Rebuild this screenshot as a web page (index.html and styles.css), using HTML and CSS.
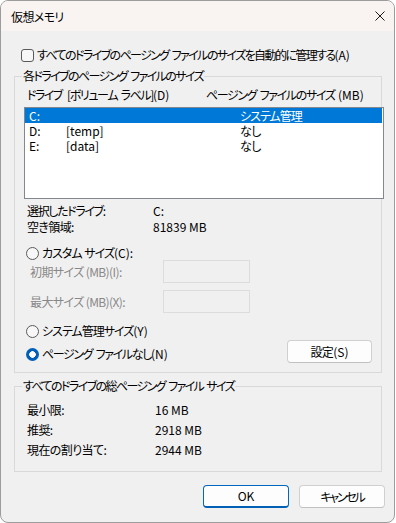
FILE: index.html
```html
<!DOCTYPE html>
<html lang="ja">
<head>
<meta charset="utf-8">
<title>仮想メモリ</title>
<link rel="stylesheet" href="styles.css">
</head>
<body>
<div class="window">
  <div class="titlebar">
    <span class="title">仮想メモリ</span>
    <svg class="close" width="10" height="10" viewBox="0 0 10 10"><path d="M0.5 0.5 L9.5 9.5 M9.5 0.5 L0.5 9.5" stroke="#1a1a1a" stroke-width="1" fill="none"/></svg>
  </div>
  <div class="content">
    <div class="check-row"><span class="checkbox"></span><span class="k2">すべてのドライブのページング ファイルのサイズを自動的に管理する<span class="num">(A)</span></span></div>

    <fieldset class="group group-drives">
      <legend class="k2">各ドライブのページング ファイルのサイズ</legend>
      <div class="list-head"><span class="h-drive k2">ドライブ</span><span class="h-label k1">[ボリューム ラベル]<span class="num">(D)</span></span><span class="k1">ページング ファイルのサイズ <span class="num">(MB)</span></span></div>
      <div class="listbox">
        <div class="lrow selected"><span class="c-drive num">C:</span><span class="c-label"></span><span class="k0">システム管理</span></div>
        <div class="lrow"><span class="c-drive num">D:</span><span class="c-label num">[temp]</span><span>なし</span></div>
        <div class="lrow"><span class="c-drive num">E:</span><span class="c-label num">[data]</span><span>なし</span></div>
      </div>
      <div class="info-row"><span class="info-label k1">選択したドライブ:</span><span class="num">C:</span></div>
      <div class="info-row"><span class="info-label">空き領域:</span><span class="num">81839 MB</span></div>

      <div class="radio-row r-custom"><span class="radio"></span><span class="k0">カスタム サイズ<span class="num">(C):</span></span></div>
      <div class="size-row"><span class="size-label">初期サイズ (MB)(I):</span><span class="textbox"></span></div>
      <div class="size-row r-max"><span class="size-label">最大サイズ (MB)(X):</span><span class="textbox"></span></div>
      <div class="radio-row r-system"><span class="radio"></span><span class="k0">システム管理サイズ<span class="num">(Y)</span></span></div>
      <div class="none-row">
        <div class="radio-row r-none"><span class="radio checked"></span><span class="k1">ページング ファイルなし<span class="num">(N)</span></span></div>
        <button class="btn btn-set">設定<span class="num">(S)</span></button>
      </div>
    </fieldset>

    <fieldset class="group group-total">
      <legend class="k2">すべてのドライブの総ページング ファイル サイズ</legend>
      <div class="total-row"><span class="total-label">最小限:</span><span class="num">16 MB</span></div>
      <div class="total-row"><span class="total-label">推奨:</span><span class="num">2918 MB</span></div>
      <div class="total-row"><span class="total-label">現在の割り当て:</span><span class="num">2944 MB</span></div>
    </fieldset>

    <div class="actions">
      <button class="btn btn-ok"><span class="num">OK</span></button>
      <button class="btn"><span class="k3">キャンセル</span></button>
    </div>
  </div>
</div>
</body>
</html>
```

FILE: styles.css
```css
* { box-sizing: border-box; }
html, body { margin: 0; padding: 0; background: #ffffff; }
body {
  font-family: "Noto Sans CJK JP", "Noto Sans", sans-serif;
  font-size: 12px;
  line-height: 16px;
  color: #000;
  font-feature-settings: "palt";
  letter-spacing: -0.6px;
  white-space: nowrap;
}
.num { letter-spacing: 0; word-spacing: 0; }
.k0 { letter-spacing: -1px; word-spacing: 1px; }
.k1 { letter-spacing: -1.35px; word-spacing: 2px; }
.k2 { letter-spacing: -1.6px; word-spacing: 2px; }
.k3 { letter-spacing: -2.2px; }
.window {
  width: 395px;
  height: 523px;
  border: 1px solid #9c9c9c;
  border-radius: 8px;
  background: #f0f0f0;
  overflow: hidden;
  display: flex;
  flex-direction: column;
}
.titlebar {
  height: 30px;
  background: #f9f4f1;
  display: flex;
  align-items: center;
  justify-content: space-between;
  padding: 0 9px 0 10px;
  flex: none;
}
.title { line-height: 16px; margin-top: 1px; }
.close { display: block; margin-top: -1px; }
.content {
  display: flex;
  flex-direction: column;
  padding-left: 13px;
}
.check-row {
  display: flex;
  align-items: center;
  height: 16px;
  margin-top: 16px;
  margin-left: 7px;
}
.checkbox {
  width: 13px;
  height: 13px;
  border: 1px solid #5a5a5a;
  border-radius: 3px;
  background: #f7f7f7;
  margin-right: 3px;
  flex: none;
}
.group {
  margin: 0;
  width: 368px;
  border: 1px solid #d9d9d9;
  min-inline-size: 0;
}
.group legend {
  line-height: 14px;
  padding: 0 1px;
}
.group-drives {
  margin-top: 6px;
  padding: 4px 0 9px 9px;
}
.group-drives legend { margin-left: -2px; }
.list-head {
  display: flex;
  height: 16px;
  padding-left: 3px;
}
.h-drive { width: 40px; }
.h-label { width: 139px; }
.listbox {
  width: 360px;
  height: 92px;
  margin-top: 4px;
  border: 1px solid #828790;
  background: #fff;
  padding: 0 1px 0 0;
}
.lrow {
  display: flex;
  height: 15px;
  line-height: 15px;
  padding-left: 4px;
}
.lrow.selected { background: #0078d7; color: #fff; }
.c-drive { width: 37px; }
.c-label { width: 174px; }
.info-row {
  display: flex;
  height: 16px;
  padding-left: 3px;
}
.listbox + .info-row { margin-top: 4px; }
.info-label { width: 126px; }
.radio-row {
  display: flex;
  align-items: center;
  height: 16px;
  padding-left: 2px;
}
.radio {
  width: 13px;
  height: 13px;
  border: 1px solid #5a5a5a;
  border-radius: 50%;
  background: #f7f7f7;
  margin-right: 3px;
  flex: none;
}
.radio.checked {
  border: none;
  background: radial-gradient(circle, #fff 0, #fff 3px, #005fb8 3.5px);
}
.r-custom { margin-top: 11px; height: 14px; }
.size-row {
  display: flex;
  align-items: center;
  height: 23px;
  padding-left: 6px;
  color: #888;
}
.r-max { margin-top: 7px; }
.size-label { width: 133px; }
.textbox {
  width: 87px;
  height: 23px;
  border: 1px solid #dcdcdc;
  background: #f0f0f0;
}
.r-system { margin-top: 10px; }
.none-row {
  display: flex;
  justify-content: space-between;
  align-items: flex-start;
  height: 23px;
  margin-top: 1px;
  padding-right: 9px;
}
.r-none { margin-top: 6px; }
.btn {
  font: inherit;
  font-feature-settings: "palt";
  letter-spacing: -0.6px;
  color: #000;
  width: 86px;
  height: 23px;
  padding: 0;
  border: 1px solid #d0d0d0;
  border-bottom-color: #c0c0c0;
  border-radius: 4px;
  background: #fdfdfd;
}
.btn-set { width: 85px; }
.group-total {
  margin-top: 6px;
  padding: 7px 0 11px 12px;
}
.group-total legend { margin-left: -5px; }
.total-row {
  display: flex;
  align-items: center;
  height: 20px;
}
.total-label { width: 128px; }
.actions {
  display: flex;
  justify-content: flex-end;
  gap: 10px;
  margin-top: 13px;
  padding-right: 9px;
}
.btn-ok {
  border: 1px solid #0067c0;
  border-bottom: 2px solid #0060b4;
}
```
